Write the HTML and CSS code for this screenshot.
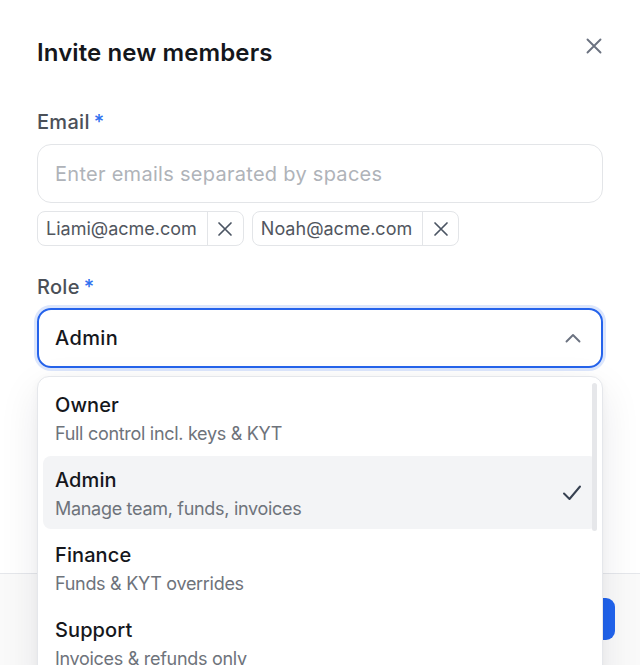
FILE: index.html
```html
<!DOCTYPE html>
<html lang="en">
<head>
<meta charset="utf-8">
<title>Invite new members</title>
<link rel="stylesheet" href="styles.css">
</head>
<body>
<div class="modal">
  <div class="content">
    <div class="header">
      <h1 class="title">Invite new members</h1>
      <button class="close" aria-label="Close">
        <svg width="16" height="16" viewBox="0 0 16 16"><path d="M1.5 1.5 L14.5 14.5 M14.5 1.5 L1.5 14.5" stroke="#6b7280" stroke-width="1.9" stroke-linecap="round" fill="none"/></svg>
      </button>
    </div>

    <div class="field field-email">
      <label class="label">Email<span class="req">*</span></label>
      <div class="input"><span class="placeholder">Enter emails separated by spaces</span></div>
      <div class="chips">
        <div class="chip"><span class="chip-text">Liami@acme.com</span><span class="chip-x"><svg width="16" height="16" viewBox="0 0 16 16"><path d="M2 2 L14 14 M14 2 L2 14" stroke="#4b5563" stroke-width="1.7" stroke-linecap="round" fill="none"/></svg></span></div>
        <div class="chip"><span class="chip-text">Noah@acme.com</span><span class="chip-x"><svg width="16" height="16" viewBox="0 0 16 16"><path d="M2 2 L14 14 M14 2 L2 14" stroke="#4b5563" stroke-width="1.7" stroke-linecap="round" fill="none"/></svg></span></div>
      </div>
    </div>

    <div class="field field-role">
      <label class="label">Role<span class="req">*</span></label>
      <div class="select">
        <span class="select-value">Admin</span>
        <svg class="chev" width="16" height="10" viewBox="0 0 16 10"><path d="M1.5 8.5 L8 2 L14.5 8.5" stroke="#6b7280" stroke-width="1.9" stroke-linecap="round" stroke-linejoin="round" fill="none"/></svg>
      </div>
    </div>
  </div>

  <div class="footer">
    <button class="btn-primary">Send invites</button>
  </div>

  <div class="menu">
    <div class="option">
      <div class="opt-text">
        <div class="opt-title">Owner</div>
        <div class="opt-desc">Full control incl. keys &amp; KYT</div>
      </div>
    </div>
    <div class="option selected">
      <div class="opt-text">
        <div class="opt-title">Admin</div>
        <div class="opt-desc">Manage team, funds, invoices</div>
      </div>
      <svg class="check" width="20" height="18" viewBox="0 0 20 18"><path d="M2 9.5 L7.5 15 L18 2.5" stroke="#374151" stroke-width="2" stroke-linecap="round" stroke-linejoin="round" fill="none"/></svg>
    </div>
    <div class="option">
      <div class="opt-text">
        <div class="opt-title">Finance</div>
        <div class="opt-desc">Funds &amp; KYT overrides</div>
      </div>
    </div>
    <div class="option">
      <div class="opt-text">
        <div class="opt-title">Support</div>
        <div class="opt-desc">Invoices &amp; refunds only</div>
      </div>
    </div>
    <div class="scroll-thumb"></div>
  </div>
</div>
</body>
</html>
```

FILE: styles.css
```css
* { box-sizing: border-box; }
html, body {
  margin: 0;
  padding: 0;
  background: #ffffff;
  overflow: hidden;
}
body {
  font-family: Inter, "Noto Sans", "Liberation Sans", sans-serif;
  color: #111827;
  width: 640px;
  height: 665px;
}
.modal {
  position: relative;
  width: 640px;
  height: 665px;
  background: #ffffff;
}
.content {
  padding: 37px 37px 0 37px;
  height: 573px;
}
.header {
  display: flex;
  justify-content: space-between;
  align-items: flex-start;
  height: 32px;
}
.title {
  margin: 0;
  font-size: 24px;
  line-height: 32px;
  font-weight: 600;
  color: #15171c;
  letter-spacing: 0.1px;
}
.close {
  width: 24px;
  height: 24px;
  margin: -3px -3px 0 0;
  padding: 0;
  border: 0;
  background: transparent;
  display: flex;
  align-items: center;
  justify-content: center;
}
.field-email { margin-top: 41px; }
.field-role { margin-top: 29px; }
.label {
  display: block;
  font-size: 20px;
  line-height: 24px;
  font-weight: 500;
  color: #4b5058;
  letter-spacing: 0.3px;
}
.req {
  color: #2f6ff0;
  margin-left: 4px;
}
.field-email .label { margin-bottom: 10px; }
.field-role .label { margin-bottom: 9px; }
.input {
  height: 59px;
  border: 1px solid #e3e5e8;
  border-radius: 14px;
  display: flex;
  align-items: center;
  padding: 0 17px;
}
.placeholder {
  font-size: 20px;
  color: #afb3b9;
  font-weight: 400;
  letter-spacing: 0.28px;
}
.chips {
  display: flex;
  gap: 8px;
  margin-top: 8px;
}
.chip {
  display: flex;
  align-items: stretch;
  height: 35px;
  border: 1px solid #e3e5e8;
  border-radius: 8px;
}
.chip-text {
  display: flex;
  align-items: center;
  padding: 0 10px 0 8px;
  font-size: 18px;
  color: #51565e;
  border-right: 1px solid #e3e5e8;
}
.chip-x {
  width: 35px;
  display: flex;
  align-items: center;
  justify-content: center;
}
.select {
  height: 60px;
  border: 2px solid #2563eb;
  border-radius: 14px;
  box-shadow: 0 0 0 3px rgba(37, 99, 235, 0.16);
  display: flex;
  align-items: center;
  justify-content: space-between;
  padding: 0 20px 0 16px;
}
.select-value {
  font-size: 20px;
  font-weight: 500;
  color: #15171c;
  letter-spacing: 0.4px;
}
.footer {
  height: 92px;
  border-top: 1px solid #e5e7eb;
  background: #fafafa;
  display: flex;
  justify-content: flex-end;
  align-items: flex-start;
  padding: 24px 25px 0 0;
}
.btn-primary {
  height: 42px;
  width: 140px;
  border: 0;
  border-radius: 9px;
  background: #2164ee;
  color: #ffffff;
  font-family: inherit;
  font-size: 18px;
  font-weight: 500;
}
.menu {
  position: absolute;
  top: 376px;
  left: 37px;
  width: 566px;
  height: 320px;
  background: #ffffff;
  border: 1px solid #e5e7eb;
  border-radius: 12px;
  box-shadow: 0 14px 40px rgba(17, 24, 39, 0.09), 0 2px 8px rgba(17, 24, 39, 0.04);
  padding: 4px 5px 4px 5px;
  display: flex;
  flex-direction: column;
  gap: 2px;
}
.option {
  height: 73px;
  border-radius: 8px;
  padding: 12px 15px 0 12px;
  display: flex;
  align-items: center;
  justify-content: space-between;
}
.opt-text { align-self: flex-start; }
.option.selected { background: #f3f4f6; }
.opt-title {
  font-size: 20px;
  line-height: 24px;
  font-weight: 500;
  color: #15171c;
  letter-spacing: 0.1px;
}
.opt-desc {
  margin-top: 6px;
  font-size: 18px;
  line-height: 22px;
  color: #6e737b;
  letter-spacing: -0.3px;
}
.check { margin-top: -12px; }
.scroll-thumb {
  position: absolute;
  top: 6px;
  right: 5px;
  width: 5px;
  height: 148px;
  border-radius: 3px;
  background: #e6e7ea;
}
```
